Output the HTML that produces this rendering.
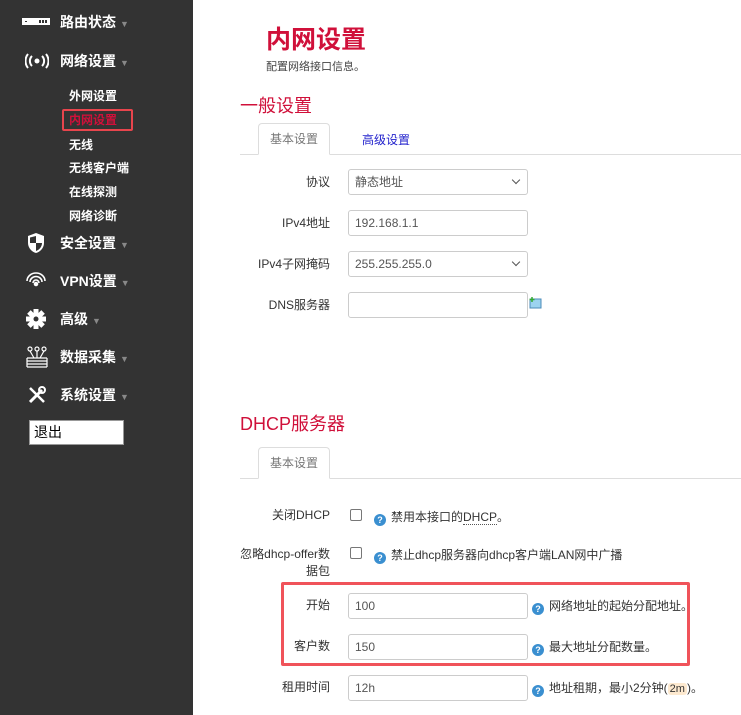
<!DOCTYPE html>
<html><head><meta charset="utf-8"><style>
*{margin:0;padding:0;box-sizing:border-box}
body{width:741px;height:715px;overflow:hidden;background:#fff;font-family:"Liberation Sans","Noto Sans CJK SC",sans-serif;position:relative;color:#333}
.sb{position:absolute;left:0;top:0;width:193px;height:715px;background:#333}
.a{position:absolute;white-space:nowrap}
.m{left:60px;color:#fff;font-weight:bold;font-size:14px;line-height:16px}
.m i{font-style:normal;color:#888;font-size:9px;margin-left:4px;font-weight:normal}
.s{left:69px;color:#fff;font-size:12px;line-height:14px;font-weight:bold}
.ic{position:absolute;left:22px}
.lbl{position:absolute;right:411px;font-size:12px;color:#333;text-align:right;line-height:14px}
.in{position:absolute;left:348px;width:180px;height:26px;border:1px solid #ccc;border-radius:3px;font-size:12px;color:#555;padding-left:6px;line-height:24px}
.sel:after{content:"";position:absolute;right:8px;top:7px;width:5px;height:5px;border-right:1.5px solid #555;border-bottom:1.5px solid #555;transform:rotate(45deg)}
.hp{display:inline-block;width:12px;height:12px;border-radius:50%;background:#3a8fd0;color:#fff;font-size:9px;line-height:12px;text-align:center;font-weight:bold;vertical-align:-2px;margin-right:5px}
.ht{position:absolute;font-size:12px;color:#333;line-height:14px;white-space:nowrap}
.cb{position:absolute;left:350px;width:12px;height:12px;border:1px solid #777;border-radius:2px}
.tab{position:absolute;left:258px;width:72px;height:32px;border:1px solid #ddd;border-bottom:1px solid #fff;border-radius:4px 4px 0 0;font-size:12px;color:#777;text-align:center;line-height:30px;background:#fff}
.line{position:absolute;left:240px;right:0;height:1px;background:#ddd}
.h2{position:absolute;left:240px;font-size:18px;color:#d0103a;line-height:20px}
</style></head><body>
<div class="sb">
<svg class="ic" style="top:18px" width="28" height="8"><rect x="0" y="0" width="28" height="7" fill="#fff"/><rect x="17" y="2" width="2" height="3" fill="#333"/><rect x="20" y="2" width="2" height="3" fill="#333"/><rect x="23" y="2" width="2" height="3" fill="#333"/><rect x="3" y="3" width="2" height="1" fill="#333"/></svg>
<div class="a m" style="top:14px">路由状态<i>▼</i></div>
<svg class="ic" style="top:53px;left:25px" width="24" height="16" fill="none" stroke="#fff" stroke-width="2"><circle cx="12" cy="8" r="2.5" fill="#fff" stroke="none"/><path d="M7 3a7 7 0 0 0 0 10M17 3a7 7 0 0 1 0 10M3 1a11 11 0 0 0 0 14M21 1a11 11 0 0 1 0 14"/></svg>
<div class="a m" style="top:53px">网络设置<i>▼</i></div>
<div class="a s" style="top:89px">外网设置</div>
<div class="a" style="left:62px;top:109px;width:71px;height:22px;border:2px solid #e8454d;border-radius:2px"></div>
<div class="a s" style="top:113px;color:#d0103a">内网设置</div>
<div class="a s" style="top:138px">无线</div>
<div class="a s" style="top:161px">无线客户端</div>
<div class="a s" style="top:185px">在线探测</div>
<div class="a s" style="top:209px">网络诊断</div>
<svg class="ic" style="top:232px;left:27px" width="18" height="22"><path d="M9 1L1 4v7c0 5 4 9 8 10 4-1 8-5 8-10V4z" fill="#fff"/><path d="M9 4v7h6c0 4-3 7-6 8V11H3V5.5L9 4z" fill="#333"/></svg>
<div class="a m" style="top:235px">安全设置<i>▼</i></div>
<svg class="ic" style="top:272px;left:25px" width="22" height="16" fill="none" stroke="#fff" stroke-width="1.6"><path d="M2 9a9 8 0 0 1 18 0M5 10a6 5.5 0 0 1 12 0M8 11a3 3 0 0 1 6 0"/><circle cx="11" cy="12" r="1.5" fill="#fff"/></svg>
<div class="a m" style="top:273px">VPN设置<i>▼</i></div>
<svg class="ic" style="top:309px;left:26px" width="20" height="20"><g fill="#fff"><circle cx="10" cy="10" r="6.5"/><rect x="7.5" y="0" width="5" height="20"/><rect x="0" y="7.5" width="20" height="5"/><rect x="7.5" y="0" width="5" height="20" transform="rotate(45 10 10)"/><rect x="7.5" y="0" width="5" height="20" transform="rotate(-45 10 10)"/></g><circle cx="10" cy="10" r="2.5" fill="#333"/></svg>
<div class="a m" style="top:311px">高级<i>▼</i></div>
<svg class="ic" style="top:346px;left:25px" width="24" height="22" fill="none" stroke="#fff" stroke-width="1.2"><circle cx="5" cy="3" r="2"/><circle cx="12" cy="3" r="2"/><circle cx="19" cy="3" r="2"/><path d="M5 5l4 7M12 5v7M19 5l-4 7M2 12h20M2 15h20M2 18h20M2 21h20M2 12v9M22 12v9"/></svg>
<div class="a m" style="top:349px">数据采集<i>▼</i></div>
<svg class="ic" style="top:385px;left:27px" width="20" height="20" fill="#fff" stroke="#fff"><path d="M3 17L15 5" stroke-width="3"/><path d="M3 3l14 14" stroke-width="2.5"/><circle cx="15" cy="5" r="3" fill="none" stroke-width="2"/></svg>
<div class="a m" style="top:387px">系统设置<i>▼</i></div>
<div class="a" style="left:29px;top:420px;width:95px;height:25px;background:#fff;border:1px solid #999;font-size:14px;color:#000;padding-left:4px;line-height:23px">退出</div>
</div>

<div class="a" style="left:266px;top:26px;font-size:25px;font-weight:bold;color:#d0103a;line-height:28px">内网设置</div>
<div class="a" style="left:266px;top:58px;font-size:11px;color:#444">配置网络接口信息。</div>
<div class="h2" style="top:96px">一般设置</div>
<div class="line" style="top:154px"></div>
<div class="tab" style="top:123px">基本设置</div>
<div class="a" style="left:362px;top:131px;font-size:12px;color:#2222cc">高级设置</div>

<div class="lbl" style="top:175px">协议</div>
<div class="in sel" style="top:169px">静态地址</div>
<div class="lbl" style="top:216px">IPv4地址</div>
<div class="in" style="top:210px">192.168.1.1</div>
<div class="lbl" style="top:257px">IPv4子网掩码</div>
<div class="in sel" style="top:251px">255.255.255.0</div>
<div class="lbl" style="top:298px">DNS服务器</div>
<div class="in" style="top:292px"></div>
<svg class="a" style="left:529px;top:297px" width="13" height="12"><rect x="1" y="2" width="11" height="9" fill="#9cd3f0" stroke="#4b8bb8"/><path d="M3 0v5M0.5 2.5h5" stroke="#3a3" stroke-width="1.5"/></svg>

<div class="h2" style="top:414px">DHCP服务器</div>
<div class="line" style="top:478px"></div>
<div class="tab" style="top:447px">基本设置</div>

<div class="lbl" style="top:508px">关闭DHCP</div>
<div class="cb" style="top:509px"></div>
<div class="ht" style="left:374px;top:510px"><span class="hp">?</span>禁用本接口的<span style="border-bottom:1px dotted #555">DHCP</span>。</div>
<div class="lbl" style="top:546px;line-height:17px">忽略dhcp-offer数<br>据包</div>
<div class="cb" style="top:547px"></div>
<div class="ht" style="left:374px;top:548px"><span class="hp">?</span>禁止dhcp服务器向dhcp客户端LAN网中广播</div>

<div class="a" style="left:281px;top:582px;width:409px;height:84px;border:3px solid #f0535a;border-radius:2px"></div>
<div class="lbl" style="top:598px">开始</div>
<div class="in" style="top:593px">100</div>
<div class="ht" style="left:532px;top:599px"><span class="hp">?</span>网络地址的起始分配地址。</div>
<div class="lbl" style="top:639px">客户数</div>
<div class="in" style="top:634px">150</div>
<div class="ht" style="left:532px;top:640px"><span class="hp">?</span>最大地址分配数量。</div>
<div class="lbl" style="top:680px">租用时间</div>
<div class="in" style="top:675px">12h</div>
<div class="ht" style="left:532px;top:681px"><span class="hp">?</span>地址租期，最小2分钟(<span style="background:#fde9cf;padding:0 2px;border-radius:3px;font-size:11px">2m</span>)。</div>
</body></html>
